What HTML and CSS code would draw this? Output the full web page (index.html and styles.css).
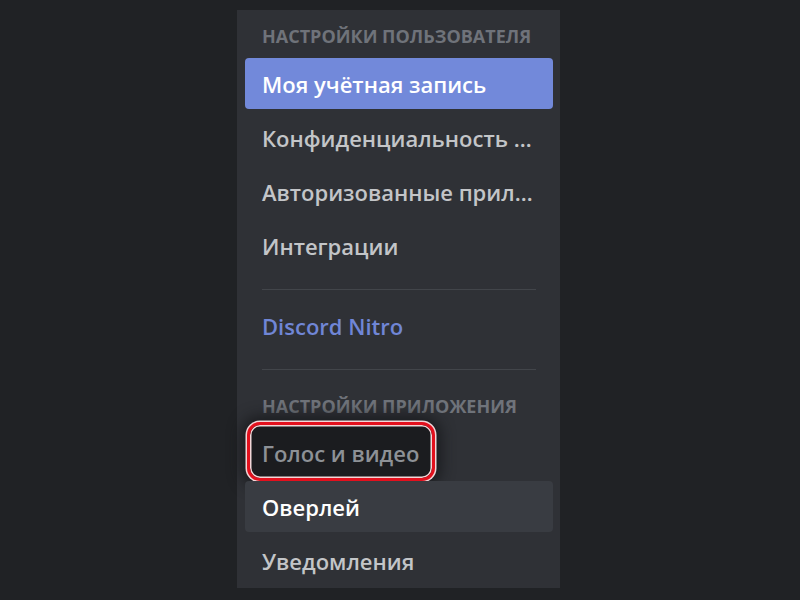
FILE: index.html
```html
<!DOCTYPE html>
<html lang="ru">
<head>
<meta charset="utf-8">
<link rel="stylesheet" href="styles.css">
</head>
<body>
<nav class="sidebar">
  <div class="header">Настройки пользователя</div>
  <div class="item active">Моя учётная запись</div>
  <div class="item">Конфиденциальность …</div>
  <div class="item">Авторизованные прил…</div>
  <div class="item">Интеграции</div>
  <div class="divider first"></div>
  <div class="item nitro">Discord Nitro</div>
  <div class="divider second"></div>
  <div class="header app">Настройки приложения</div>
  <div class="item marked"><span class="highlight"></span><span class="label">Голос и видео</span></div>
  <div class="item hover">Оверлей</div>
  <div class="item">Уведомления</div>
</nav>
</body>
</html>
```

FILE: styles.css
```css
html, body {
  margin: 0;
  padding: 0;
  background: #202225;
  height: 600px;
  overflow: hidden;
}
body {
  font-family: "Open Sans", "Noto Sans", sans-serif;
}
.sidebar {
  box-sizing: border-box;
  margin: 10px 0 0 237px;
  width: 323px;
  height: 578px;
  padding: 0 7px 0 8px;
  background: #2f3136;
  display: flex;
  flex-direction: column;
}
.header {
  padding: 15px 17px 11px;
  line-height: 22px;
  font-size: 18px;
  font-weight: 700;
  text-transform: uppercase;
  color: #6f737a;
  white-space: nowrap;
}
.header.app {
  margin-top: 9px;
  padding-top: 16px;
  padding-bottom: 10px;
}
.item {
  position: relative;
  height: 51px;
  margin-bottom: 3px;
  padding: 0 17px;
  border-radius: 4px;
  display: flex;
  align-items: center;
  font-size: 22px;
  font-weight: 600;
  color: #c3c5c8;
  white-space: nowrap;
  flex-shrink: 0;
}
.item.active {
  background: #7289da;
  color: #ffffff;
}
.item.hover {
  background: #393c42;
  color: #ffffff;
}
.item.nitro {
  color: #7086d6;
  margin-top: 10px;
  margin-bottom: 0;
}
.divider {
  height: 1px;
  background: #42454a;
  margin: 15px 17px 0;
  flex-shrink: 0;
}
.divider.second {
  margin-top: 18px;
}
.item.marked .label {
  position: relative;
  color: #8d9196;
}
.highlight {
  position: absolute;
  left: 2px;
  top: -5px;
  width: 188px;
  height: 59px;
  box-sizing: border-box;
  border: 3px solid #e3101d;
  border-radius: 13px;
  background: #1b1c1f;
  box-shadow: 0 0 0 1.5px #f2d6d8, inset 0 0 0 1.5px #f2d6d8, 0 0 14px 6px rgba(20, 21, 24, 0.75);
}
```
